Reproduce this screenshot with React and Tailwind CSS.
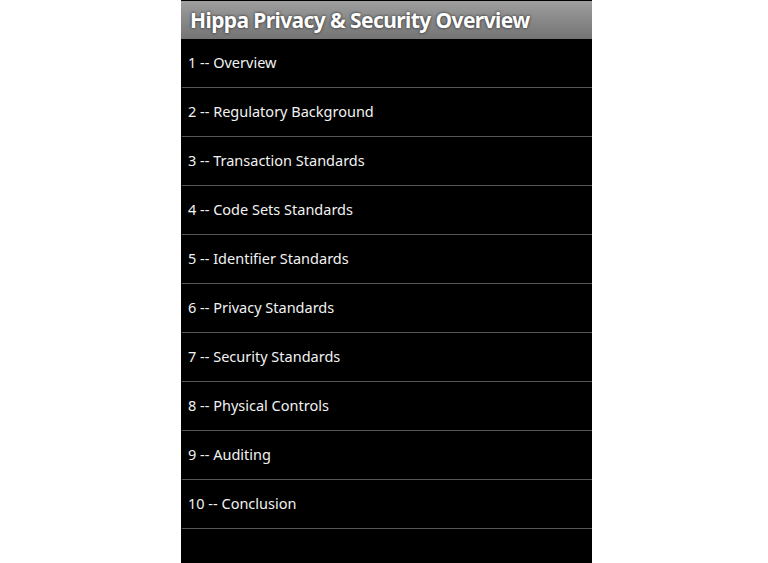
import React from 'react';

const chapters = [
  '1 -- Overview',
  '2 -- Regulatory Background',
  '3 -- Transaction Standards',
  '4 -- Code Sets Standards',
  '5 -- Identifier Standards',
  '6 -- Privacy Standards',
  '7 -- Security Standards',
  '8 -- Physical Controls',
  '9 -- Auditing',
  '10 -- Conclusion',
];

const App = () => {
  return (
    <div className="bg-white h-[563px] overflow-hidden" style={{ fontFamily: '"Noto Sans", "DejaVu Sans", sans-serif' }}>
      <div className="w-[411px] h-full ml-[181px] bg-black flex flex-col">
        <div className="mt-px h-[38px] bg-gradient-to-b from-[#9e9e9e] to-[#747474] flex items-center pl-[9px]">
          <h1 className="text-white font-bold text-[21px] leading-none tracking-[-0.6px] [text-shadow:0_0_3px_rgba(0,0,0,0.8)]">
            Hippa Privacy &amp; Security Overview
          </h1>
        </div>
        <ul className="pl-px">
          {chapters.map((c) => (
            <li key={c} className="h-[49px] border-b border-[#555555] flex items-center pl-[6px]">
              <span className="text-[#f2f2f2] text-[14.5px]">{c}</span>
            </li>
          ))}
        </ul>
      </div>
    </div>
  );
};

export default App;
